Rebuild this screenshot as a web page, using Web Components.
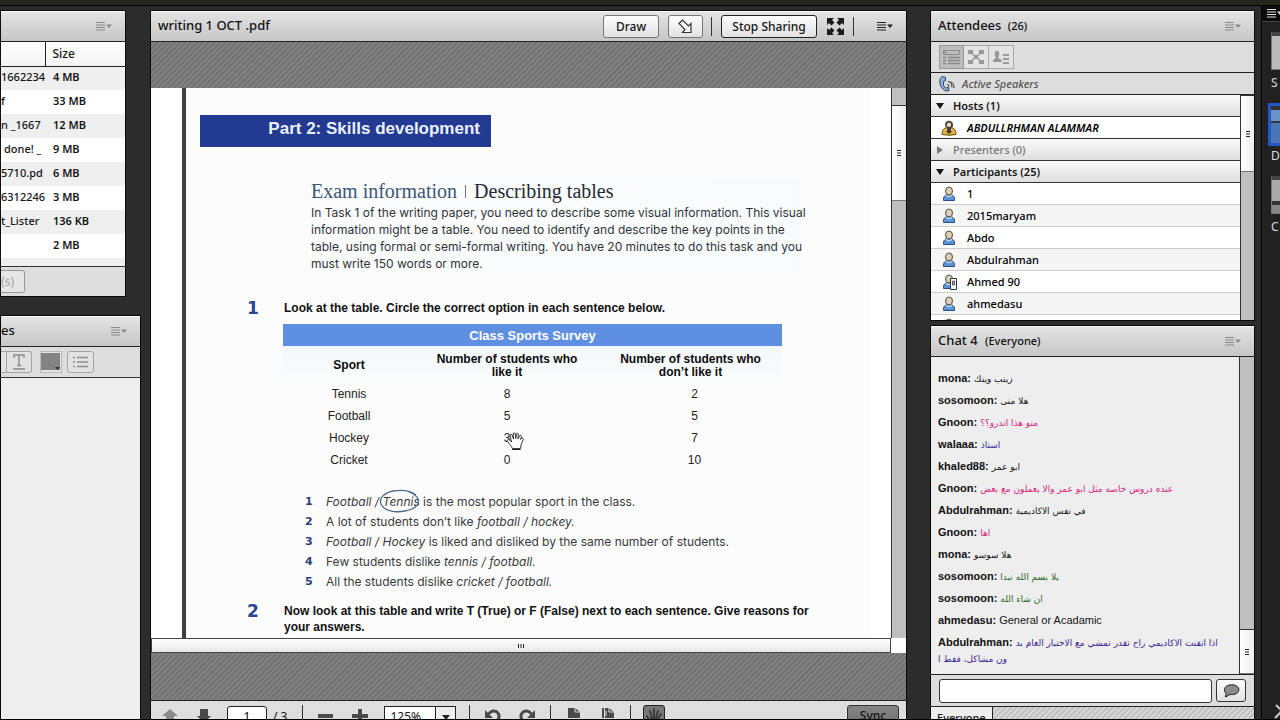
<!DOCTYPE html>
<html lang="en">
<head>
<meta charset="utf-8">
<title>Meeting room</title>
<style>
html, body { margin: 0; height: 100%; }
body { overflow: hidden; background: #2c2c2c; font-family: "Noto Sans", "Open Sans", sans-serif; font-size: 12px; color: #161616; }
</style>
</head>
<body>
<meeting-room></meeting-room>
<script>
function define(name, html) {
  const template = document.createElement('template');
  template.innerHTML = html;
  customElements.define(name, class extends HTMLElement {
    constructor() {
      super();
      this.attachShadow({ mode: 'open' }).append(template.content.cloneNode(true));
    }
  });
}

/* Pod options glyph: four lines and a small triangle */
define('menu-glyph', `
<style>:host{display:block;width:16px;height:9px;color:#8a8a8a}svg{display:block}</style>
<svg width="16" height="9" viewBox="0 0 16 9"><path d="M0 .5h9M0 3h9M0 5.5h9M0 8h9" stroke="currentColor" fill="none"/><path d="M10 2.5h6l-3 3.5z" fill="currentColor"/></svg>`);

/* Pod frame: header with title and actions, body below */
define('pod-frame', `
<style>
:host{display:flex;flex-direction:column;border:1px solid #0a0a0a;box-sizing:border-box;overflow:hidden;background:#ddd;min-width:0;min-height:0}
header{flex:none;box-sizing:border-box;height:31px;display:flex;align-items:center;padding:0 13px 0 7px;background:linear-gradient(#e3e3e3,#c6c6c6);border-top:1px solid #f8f8f8;border-bottom:1px solid #222}
h2{margin:0;padding-bottom:3px;flex:1;min-width:0;font-size:13px;line-height:18px;font-weight:500;white-space:nowrap;color:#111}
.body{flex:1;min-height:0;display:flex;flex-direction:column}
</style>
<header><h2><slot name="title"></slot></h2><slot name="actions"></slot></header>
<div class="body"><slot></slot></div>`);

define('grip-bar', `
<style>
:host{display:flex;flex-direction:column;flex:none;width:13px;background:#c0c0c0;border-left:1px solid #333;box-sizing:border-box}
.thumb{flex:none;display:grid;place-items:center;box-sizing:border-box;height:var(--thumb,60px);margin-top:var(--top,0);background:linear-gradient(90deg,#fff,#eee);border-top:1px solid #333;border-bottom:1px solid #777}
</style>
<div class="thumb"><svg width="4" height="6" viewBox="0 0 4 6"><path d="M0 .5h4M0 3h4M0 5.5h4" stroke="#222"/></svg></div>`);

define('files-pod', `
<style>
:host{display:block;flex:none}
pod-frame{margin-right:15px;border-left-color:#111}
table{width:100%;border-collapse:collapse;table-layout:fixed;font-size:11px;font-weight:600;background:#fff}
col.name{width:44px}
th,td{height:24px;padding:0 0 2px;box-sizing:border-box;text-align:left;white-space:nowrap;line-height:16px;font-weight:600}
th{height:24px;padding:0;border-bottom:1px solid #222;background:linear-gradient(#fff,#f3f3f3);font-size:12px;font-weight:500}
th+th{border-left:1px solid #222;padding-left:7px}
td{font-weight:500}
td+td{padding-left:8px;font-weight:600}
tbody tr:nth-child(odd){background:#efefef}
td.in{padding-left:3px}
.rest{height:8px;background:#efefef}
footer{height:30px;border-top:1px solid #333;background:#ddd;display:flex;align-items:center;box-sizing:border-box}
button{font:500 12px/16px "Noto Sans",sans-serif;color:#aaa;height:23px;width:24px;padding:0;text-align:left;background:#e6e6e6;border:1px solid #999;border-left:0;border-radius:0 3px 3px 0}
</style>
<pod-frame>
<menu-glyph slot="actions"></menu-glyph>
<table><colgroup><col class="name"><col></colgroup>
<thead><tr><th></th><th>Size</th></tr></thead>
<tbody>
<tr><td>1662234</td><td>4 MB</td></tr>
<tr><td>f</td><td>33 MB</td></tr>
<tr><td>n _1667</td><td>12 MB</td></tr>
<tr><td class="in">done! _</td><td>9 MB</td></tr>
<tr><td>5710.pd</td><td>6 MB</td></tr>
<tr><td>6312246</td><td>3 MB</td></tr>
<tr><td>t_Lister</td><td>136 KB</td></tr>
<tr><td></td><td>2 MB</td></tr>
</tbody></table>
<div class="rest"></div>
<footer><button type="button">(s)</button></footer>
</pod-frame>`);

define('notes-pod', `
<style>
:host{display:flex;flex:1;min-height:0}
pod-frame{flex:1}
h3{margin:0 0 0 -7px;font:inherit}
.tools{flex:none;height:31px;box-sizing:border-box;display:flex;align-items:center;border-bottom:1px solid #333;background:#ddd}
button{box-sizing:border-box;height:22px;padding:0;display:grid;place-items:center;background:#e2e2e2;border:1px solid #a5a5a5}
.a{width:6px;border-left:0}
.b{width:25px;border-left:0;border-radius:0 3px 3px 0}
.c{width:22px;margin-left:8px;border-color:#bbb}
.d{width:27px;margin-left:5px;border-radius:3px}
.page{flex:1;background:#eee}
</style>
<pod-frame>
<h3 slot="title">es</h3><menu-glyph slot="actions"></menu-glyph>
<div class="tools"><button class="a" aria-label="Style"></button><button class="b" aria-label="Underline"><svg width="12" height="16" viewBox="0 0 12 16"><path d="M1 4V1h10v3M6 1v10M4 11.5h4M0 15h12" fill="none" stroke="#8a8a8a" stroke-width="1.4"/></svg></button>
<button class="c" aria-label="Colour"><svg width="20" height="18" viewBox="0 0 20 18"><path d="M0 0h19v17H0z" fill="#838383"/><path d="M14 14h5l-2.500 3z" fill="#333"/></svg></button>
<button class="d" aria-label="List"><svg width="15" height="12" viewBox="0 0 15 12"><path d="M0 1.500h2M0 6h2M0 10.500h2M4 1.500h11M4 6h11M4 10.500h11" stroke="#8d8d8d" stroke-width="1.500"/></svg></button></div>
<div class="page"></div>
</pod-frame>`);

define('sports-table', `
<style>
:host{display:block}
table{width:499px;border-collapse:collapse;table-layout:fixed;text-align:center;font-size:12px;line-height:14px;color:#222}
.s{width:132px}.l{width:184px}
th,td{padding:0;height:22px;box-sizing:border-box}
td:last-child{padding-left:8px}
.title{background:#5f8fe0;color:#fff;font-size:13px;font-weight:bold;padding-top:2px}
.heads th{height:37px;padding-top:2px;line-height:13px;color:#0c0c0c;background:linear-gradient(#f3f8fc,#fbfdfd)}
tbody th{font-weight:normal}
.spot{position:relative}
.spot svg{position:absolute;left:2px;top:0}
</style>
<table>
<colgroup><col class="s"><col class="l"><col></colgroup>
<thead><tr><th class="title" colspan="3">Class Sports Survey</th></tr>
<tr class="heads"><th>Sport</th><th>Number of students who<br>like it</th><th>Number of students who<br>don’t like it</th></tr></thead>
<tbody>
<tr><th>Tennis</th><td>8</td><td>2</td></tr>
<tr><th>Football</th><td>5</td><td>5</td></tr>
<tr><th>Hockey</th><td><span class="spot">3<svg width="19" height="20" viewBox="0 0 19 20"><path d="M6.500 17.500C5 14.500 3 12.500 1.500 10.500c-1-1.500.8-2.500 2-1.500l2 2L4.200 4.800c-.3-1.800 1.500-2.200 2-.6L7.500 8 7.200 3c0-1.600 1.800-1.700 2-.2L9.800 7.500l.6-4.300c.2-1.500 2-1.300 1.900.2L12 8l1.500-3.200c.6-1.300 2.200-.7 1.900.6L14.500 8.500l1.200-1.200c1-.8 2 .2 1.500 1.200l-2 5-.7 4z" fill="#fff" stroke="#222" stroke-width=".9"/><path d="M6 18.500h8.500" stroke="#222"/></svg></span></td><td>7</td></tr>
<tr><th>Cricket</th><td>0</td><td>10</td></tr>
</tbody></table>`);

define('exercise-row', `
<style>
:host{display:grid;grid-template-columns:37px 1fr;font-weight:bold;font-size:12px;line-height:16px;color:#111;padding-left:47px}
.n{font:bold 17px/16px "DejaVu Sans",sans-serif;color:#2b4490}
</style><span class="n"><slot name="n"></slot></span><span><slot></slot></span>`);

define('document-page', `
<style>
:host{display:block;flex:1;min-width:0;overflow:hidden;background:#fff;font-family:"Liberation Sans",Arial,sans-serif}
article{margin:0 20px 0 31px;padding:27px 0 0 14px;border-left:4px solid #3e3e3e;background:#fcfcfd;min-height:100%;box-sizing:border-box;white-space:nowrap}
h1{margin:0;width:291px;height:32px;box-sizing:border-box;padding:0 11px 4px 0;text-align:right;background:#233a92;color:#e9f1fb;font-size:17px;line-height:28px;font-weight:bold}
section{margin:32px 0 28px 90px;padding-left:21px;width:512px;box-sizing:border-box;background:linear-gradient(90deg,#fcfcfd,#f8fbfc)}
h2{margin:0;font:20px/25px "Liberation Serif",serif;color:#222a33}
h2 b{font-weight:normal;color:#3a5678}
h2 i{display:inline-block;width:1px;height:13px;background:#777;margin:0 8px}
p{margin:0;font:12px/17px Inter,"Liberation Sans",sans-serif;color:#30343a}
sports-table{margin:8px 0 21px 83px}
ol{list-style:none;margin:0 0 11px 105px;padding:0;font:12px/20px Inter,"Liberation Sans",sans-serif;color:#3a3a3a}
li{display:grid;grid-template-columns:21px 1fr}
li b{font:bold 11px/20px "DejaVu Sans",sans-serif;color:#27407e}
.ring{position:relative}
.ring svg{position:absolute;left:-4px;top:-5px}
</style>
<article>
<h1>Part 2: Skills development</h1>
<section><h2><b>Exam information</b><i></i>Describing tables</h2>
<p>In Task 1 of the writing paper, you need to describe some visual information. This visual<br>information might be a table. You need to identify and describe the key points in the<br>table, using formal or semi-formal writing. You have 20 minutes to do this task and you<br>must write 150 words or more.</p></section>
<exercise-row><span slot="n">1</span>Look at the table. Circle the correct option in each sentence below.</exercise-row>
<sports-table></sports-table>
<ol>
<li><b>1</b><span><em>Football / <span class="ring">Tennis<svg width="41" height="24" viewBox="0 0 41 24"><path d="M37 6C31 1 22 .7 14 2 4 4 0 10 2 15c3 7 14 9 24 7 9-1.500 15-6 13-12-1-3-4-5-9-7" fill="none" stroke="#4c6c8c" stroke-width="1.300"/></svg></span></em> is the most popular sport in the class.</span></li>
<li><b>2</b><span>A lot of students don’t like <em>football / hockey.</em></span></li>
<li><b>3</b><span><em>Football / Hockey</em> is liked and disliked by the same number of students.</span></li>
<li><b>4</b><span>Few students dislike <em>tennis / football.</em></span></li>
<li><b>5</b><span>All the students dislike <em>cricket / football.</em></span></li>
</ol>
<exercise-row><span slot="n">2</span>Now look at this table and write T (True) or F (False) next to each sentence. Give reasons for<br>your answers.</exercise-row>
</article>`);

define('share-pod', `
<style>
:host{display:flex;flex:1;min-width:0}
pod-frame{flex:1}
.act{display:flex;align-items:center}
button{box-sizing:border-box;height:23px;padding:0;font:500 12px/16px "Noto Sans",sans-serif;color:#161616;background:linear-gradient(#fdfdfd,#e2e2e2);border:1px solid #777;border-radius:3px;display:grid;place-items:center}
.draw{width:56px}.point{width:35px;margin-left:9px}.stop{width:96px;border-color:#222;margin:0 10px 0 9px}
.full{border:0;background:none;width:17px}
.sep{width:1px;height:19px;background:#333;flex:none}
.point+.sep{margin-left:8px}
.full+.sep{margin:0 23px 0 9px}
menu-glyph{color:#222}
.stage{flex:1;min-height:0;display:flex;flex-direction:column;padding:46px 0 47px;background:#777 repeating-linear-gradient(135deg,#747474 0,#747474 2px,#8c8c8c 3px,#747474 4px)}
.view{flex:1;min-height:0;display:flex}
.view grip-bar{width:15px;--top:17px;--thumb:96px}
.hbar{flex:none;height:15px;margin-right:15px;box-sizing:border-box;border:1px solid #444;background:linear-gradient(#fff,#e8e8e8);display:grid;place-items:center}
.low{background:#fff;flex:none}
.tools{flex:none;height:31px;box-sizing:border-box;display:flex;align-items:center;padding:0 7px 0 11px;border-top:1px solid #222;background:#dedede;font-size:12px}
.tools button.i{border:0;background:none;width:16px}
.tools button.i.next{margin-left:18px}
.tools .sep{height:23px}
.tools .wide{margin:0 15px}
.tools .near{margin:0 12px 0 14px}
.turn{margin-left:15px}
input{box-sizing:border-box;width:40px;height:21px;margin:0 6px 0 15px;border:1px solid #222;border-radius:3px;font:12px "Noto Sans",sans-serif;text-align:center;padding:0;background:#fff}
.zoom{position:relative;display:block;margin:0 13px 0 16px}
select{appearance:none;display:block;box-sizing:border-box;width:72px;height:21px;border:1px solid #222;border-radius:0;padding:0 0 0 5px;font:12px "Noto Sans",sans-serif;color:#161616;background:linear-gradient(90deg,#fff 50px,#222 50px 51px,#eee 51px)}
.zoom svg{position:absolute;right:6px;top:9px;pointer-events:none}
.grab.grab{width:22px;background:#777;border-color:#222}
.sync{width:52px;margin-left:auto;background:linear-gradient(#858585,#6c6c6c);border-color:#333}
</style>
<pod-frame>
<span slot="title">writing 1 OCT .pdf</span>
<div slot="actions" class="act">
<button class="draw">Draw</button><button class="point" aria-label="Pointer"><svg width="16" height="15" viewBox="0 0 16 15"><path d="M1 4.500 4.500 1l6 6 2.500-2.500V13.500H4.500L7 10.500z" fill="#fafafa" stroke="#333" stroke-width="1.200"/></svg></button><span class="sep"></span>
<button class="stop">Stop Sharing</button><button class="full" aria-label="Full screen"><svg width="17" height="17" viewBox="0 0 17 17" fill="#1c1c1c"><path d="M0 0h7L5 2l2.500 2.500-3 3L2 5 0 7zM17 0v7l-2-2-2.500 2.500-3-3L12 2l-2-2zM0 17v-7l2 2 2.500-2.500 3 3L5 15l2 2zM17 17h-7l2-2-2.500-2.500 3-3L15 12l2-2z"/></svg></button><span class="sep"></span><menu-glyph></menu-glyph>
</div>
<div class="stage"><div class="view"><document-page></document-page><grip-bar></grip-bar></div>
<div class="low"><div class="hbar"><svg width="6" height="4" viewBox="0 0 6 4"><path d="M.5 0v4M3 0v4M5.500 0v4" stroke="#222"/></svg></div></div></div>
<div class="tools">
<button class="i" aria-label="Previous page"><svg width="16" height="14" viewBox="0 0 16 14"><path d="M8 0l8 7h-4v7H4V7H0z" fill="#8c8c8c"/></svg></button>
<button class="i next" aria-label="Next page"><svg width="16" height="14" viewBox="0 0 16 14"><path d="M8 14l7-7h-3V0H4v7H1z" fill="#4a4a4a"/></svg></button>
<input value="1" aria-label="Page"><span>/ 3</span>
<span class="sep wide"></span>
<button class="i" aria-label="Zoom out"><svg width="16" height="14" viewBox="0 0 16 14"><path d="M0 5h15v4H0z" fill="#4a4a4a"/></svg></button>
<button class="i next" aria-label="Zoom in"><svg width="16" height="14" viewBox="0 0 16 14"><path d="M6 0h4v5h6v4h-6v5H6V9H0V5h6z" fill="#4a4a4a"/></svg></button>
<label class="zoom"><select aria-label="Zoom level"><option>125%</option></select><svg width="8" height="5" viewBox="0 0 8 5"><path d="M0 0h8L4 5z" fill="#222"/></svg></label>
<span class="sep"></span>
<button class="i turn" aria-label="Rotate left"><svg width="16" height="14" viewBox="0 0 16 14"><path d="M3.500 5C6 1.500 10 1 12.500 3.500c2.500 2.500 2 6.500-1.500 9" fill="none" stroke="#4a4a4a" stroke-width="3"/><path d="M0 1v8h8z" fill="#4a4a4a"/></svg></button>
<button class="i next" aria-label="Rotate right"><svg width="16" height="14" viewBox="0 0 16 14"><path d="M12.500 5C10 1.500 6 1 3.500 3.500 1 6 1.500 10 5 12.500" fill="none" stroke="#4a4a4a" stroke-width="3"/><path d="M16 1v8H8z" fill="#4a4a4a"/></svg></button>
<span class="sep wide"></span>
<button class="i" aria-label="Fit page"><svg width="14" height="16" viewBox="0 0 14 16"><path d="M1 0h7l5 4v6H1z" fill="#4a4a4a"/><path d="M8 0v4h5" fill="none" stroke="#ddd"/><path d="M1 12h12v2H1z" fill="#4a4a4a"/></svg></button>
<button class="i next" aria-label="Fit width"><svg width="14" height="16" viewBox="0 0 14 16"><path d="M1 0h2v10H1zM4 0h4l5 4v6H4z" fill="#4a4a4a"/><path d="M8 0v4h5M5 3v5" fill="none" stroke="#ddd"/><path d="M1 12h12v2H1z" fill="#4a4a4a"/></svg></button>
<span class="sep near"></span>
<button class="grab" aria-label="Pan"><svg width="16" height="16" viewBox="0 0 16 16"><path d="M5 15 1 8M6 10 4 3M8 10V1M10 10l2-7M11 12l4-6" stroke="#3c3c3c" stroke-width="2" stroke-linecap="round"/><path d="M4 9h8l-1 7H6z" fill="#3c3c3c"/></svg></button>
<button class="sync">Sync</button>
</div>
</pod-frame>`);

/* One attendee: icon by role, name from the slot */
customElements.define('attendee-row', class extends HTMLElement {
  constructor() {
    super();
    const kind = this.getAttribute('kind') || 'user';
    const host = kind === 'host';
    const suit = host ? '#e0b43c' : '#5d93d4';
    const edge = host ? '#6b4d10' : '#284f86';
    this.attachShadow({ mode: 'open' }).innerHTML = `
<style>
:host{display:flex;align-items:center;box-sizing:border-box;height:22px;padding-left:10px;gap:10px;border-bottom:1px solid #ccc;background:#fff;font-size:11px;line-height:16px;font-weight:500;white-space:nowrap;color:#000}
:host(:nth-of-type(even)){background:#f5f5f5}
:host([kind=host]){font-style:italic;border-bottom-color:#333;font-weight:600;background:#fff}
svg{flex:none;display:block}
</style>
<svg width="16" height="16" viewBox="0 0 16 16"><path d="${host ? 'M1 14.500c0-5 2-7 7-7s7 2 7 7q-7 1.500-14 0z' : 'M2.500 14.500c-.5-4 1.500-6 5.500-6s6 2 5.500 6z'}" fill="${suit}" stroke="${edge}"/><path d="M5 9.500q3 2.500 6 0" fill="none" stroke="#e8f0fa"/><ellipse cx="8" cy="5" rx="3.500" ry="4" fill="#d9cfb4" stroke="#55503f"/>
${host ? '<path d="M4.500 3.500C5 .8 11 .8 11.500 3.500V7l-2 1 1 4-2.500 2-2.500-2 1-3z" fill="#4b3b2a"/><path d="M6 3.500q2-1.500 4 0v2.500q-2 2-4 0z" fill="#e6dcc4"/>' : ''}
${kind === 'mobile' ? '<path d="M9.500 4.500h6v11h-6z" fill="#fff" stroke="#333"/><path d="M11.500 7h2v4h-2z" fill="#8aa6c8" stroke="#333" stroke-width=".7"/>' : ''}</svg><span><slot></slot></span>`;
  }
});

define('group-head', `
<style>
:host{display:flex;align-items:center;box-sizing:border-box;height:22px;padding-left:5px;gap:9px;font-size:11px;line-height:16px;font-weight:600;background:linear-gradient(#fbfbfb,#dedede);border-bottom:1px solid #333;white-space:nowrap}
:host([closed]){color:#777;font-weight:500}
:host([closed]) svg{transform:rotate(-90deg)}
svg{flex:none}
</style><svg width="8" height="6" viewBox="0 0 8 6"><path d="M0 0h8L4 6z" fill="currentColor"/></svg><span><slot></slot></span>`);

define('attendees-pod', `
<style>
:host{display:flex;flex:none;height:311px}
pod-frame{flex:1}
small{font-size:11px;margin-left:3px}
.tools{flex:none;height:31px;box-sizing:border-box;display:flex;align-items:center;padding-left:8px;border-bottom:1px solid #222}
button{box-sizing:border-box;width:25px;height:24px;padding:0;display:grid;place-items:center;background:#e3e3e3;border:1px solid #aaa}
button+button{border-left:0}
.on{background:#bdbdbd;border-color:#999}
.speak{flex:none;height:22px;box-sizing:border-box;display:flex;align-items:center;gap:7px;padding-left:8px;font-size:11px;font-style:italic;font-weight:500;color:#555;border-bottom:1px solid #222}
.list{flex:1;min-height:0;display:flex}
.rows{flex:1;min-width:0;overflow:hidden;background:#fff}
grip-bar{--thumb:77px;width:14px}
</style>
<pod-frame>
<span slot="title">Attendees <small>(26)</small></span><menu-glyph slot="actions"></menu-glyph>
<div class="tools"><button class="on" aria-label="Attendee view"><svg width="17" height="15" viewBox="0 0 17 15"><path d="M.5.500h16v4H.5z" fill="none" stroke="#8a8a8a"/><path d="M0 7.500h3M5 7.500h12M0 10.500h3M5 10.500h12M0 13.500h3M5 13.500h12M1 2.500h3" stroke="#8a8a8a" stroke-width="1.500"/></svg></button><button aria-label="Breakout view"><svg width="16" height="14" viewBox="0 0 16 14"><path d="M2 2l12 10M14 2 2 12" stroke="#999" stroke-width="1.500"/><path d="M0 0h5v4H0zM11 0h5v4h-5zM0 10h5v4H0zM11 10h5v4h-5zM6 5h4v4H6z" fill="#999"/></svg></button><button aria-label="Status view"><svg width="16" height="14" viewBox="0 0 16 14"><path d="M0 12c0-3 1-3 3-4q-2-3-1-6 2-3 4 0 1 3-1 6c2 1 4 1 4 4zM10 4h6v2h-6zM10 8h6v2h-6zM10 12h6v2h-6z" fill="#999"/></svg></button></div>
<div class="speak"><svg width="16" height="16" viewBox="0 0 16 16"><path d="M2 1.500C0 4 .5 10 4 13c2 2 4 2.500 6 1.500l-.5-3-3 .5C4.500 10.500 4 7.500 4.500 5.500l2-.8V1.500C5 .5 3 .5 2 1.500z" fill="#8fb6dc" stroke="#24405e"/><path d="M8 8q2 .5 2 3M9 5.500q4 .5 4 6M11 6q4 0 4 6" fill="none" stroke="#333"/></svg><span>Active Speakers</span></div>
<div class="list"><div class="rows">
<group-head>Hosts (1)</group-head>
<div><attendee-row kind="host">ABDULLRHMAN ALAMMAR</attendee-row></div>
<group-head closed>Presenters (0)</group-head>
<group-head>Participants (25)</group-head>
<div><attendee-row>1</attendee-row><attendee-row>2015maryam</attendee-row><attendee-row>Abdo</attendee-row><attendee-row>Abdulrahman</attendee-row><attendee-row kind="mobile">Ahmed 90</attendee-row><attendee-row>ahmedasu</attendee-row><attendee-row></attendee-row></div>
</div><grip-bar></grip-bar></div>
</pod-frame>`);

define('chat-line', `
<style>
:host{display:block;padding:3px 0;font:11px/16px "Liberation Sans",Arial,sans-serif;color:#161616;white-space:nowrap}
b{color:#111}
.t{color:var(--tone,#161616)}
</style><b><slot name="who"></slot>:</b> <span class="t"><slot></slot></span>`);

define('chat-pod', `
<style>
:host{display:flex;flex:1;min-height:0;margin-top:4px}
pod-frame{flex:1}
small{font-size:11px;margin-left:4px}
.log{flex:1;min-height:0;display:flex;background:#eee}
.lines{flex:1;min-width:0;overflow:hidden;padding:10px 0 0 7px}
bdi{font:9px/12px "DejaVu Sans",sans-serif}
.pink{--tone:#d8257c}.navy{--tone:#34309a}.green{--tone:#2b6a2b}.violet{--tone:#3c1f94}
grip-bar{width:15px;justify-content:flex-end;--thumb:45px}
form{flex:none;height:32px;box-sizing:border-box;display:flex;align-items:center;gap:4px;margin:0;padding:0 8px;border-top:1px solid #222}
input{flex:1;min-width:0;height:24px;box-sizing:border-box;border:1px solid #333;border-radius:3px;background:#fff;padding:0 4px}
button{flex:none;width:30px;height:23px;box-sizing:border-box;padding:0;display:grid;place-items:center;border:1px solid #333;border-radius:3px;background:linear-gradient(#fcfcfc,#e2e2e2)}
nav{flex:none;height:25px;box-sizing:border-box;border-top:1px solid #222;display:flex;background:#ccc repeating-linear-gradient(135deg,#c4c4c4 0,#c4c4c4 2px,#e4e4e4 3px,#c4c4c4 4px)}
nav a{width:62px;box-sizing:border-box;padding:1px 0 0 6px;border-right:1px solid #222;background:#eee;color:#161616;text-decoration:none;font-size:11px;line-height:20px;font-weight:500}
</style>
<pod-frame>
<span slot="title">Chat 4 <small>(Everyone)</small></span><menu-glyph slot="actions"></menu-glyph>
<div class="log"><div class="lines">
<chat-line><span slot="who">mona</span><bdi dir="rtl">زينب وينك</bdi></chat-line>
<chat-line><span slot="who">sosomoon</span><bdi dir="rtl">هلا منى</bdi></chat-line>
<chat-line class="pink"><span slot="who">Gnoon</span><bdi dir="rtl">منو هذا اندرو؟؟</bdi></chat-line>
<chat-line class="navy"><span slot="who">walaaa</span><bdi dir="rtl">استاذ</bdi></chat-line>
<chat-line><span slot="who">khaled88</span><bdi dir="rtl">ابو عمر</bdi></chat-line>
<chat-line class="pink"><span slot="who">Gnoon</span><bdi dir="rtl">عنده دروس خاصه مثل ابو عمر والا يعملون مع بعض</bdi></chat-line>
<chat-line><span slot="who">Abdulrahman</span><bdi dir="rtl">في نفس الاكاديمية</bdi></chat-line>
<chat-line class="pink"><span slot="who">Gnoon</span><bdi dir="rtl">اها</bdi></chat-line>
<chat-line><span slot="who">mona</span><bdi dir="rtl">هلا سوسو</bdi></chat-line>
<chat-line class="green"><span slot="who">sosomoon</span><bdi dir="rtl">يلا بسم الله نبدا</bdi></chat-line>
<chat-line class="green"><span slot="who">sosomoon</span><bdi dir="rtl">ان شاء الله</bdi></chat-line>
<chat-line><span slot="who">ahmedasu</span>General or Acadamic</chat-line>
<chat-line class="violet"><span slot="who">Abdulrahman</span><bdi dir="rtl">اذا اتقنت الاكاديمي راح تقدر تمشي مع الاختبار العام بد</bdi><br><bdi dir="rtl">ون مشاكل، فقط ا</bdi></chat-line>
</div><grip-bar></grip-bar></div>
<form><input type="text" aria-label="Message"><button type="button" aria-label="Send"><svg width="17" height="14" viewBox="0 0 17 14"><path d="M3 9.500C-1 5 3 .8 8.500.8S17 4 15.500 7.500C14.500 10 10 11 7 10.500L2.500 13z" fill="#8c8c8c" stroke="#222"/></svg></button></form>
<nav><a href="#everyone">Everyone</a></nav>
</pod-frame>`);

define('layout-strip', `
<style>
:host{display:flex;flex-direction:column;flex:none;width:18px;margin-top:-4px;border-left:1px solid #000;background:#212121;overflow:hidden;color:#ddd;font-size:12px}
.top{flex:none;height:15px;padding-left:5px;background:#0c0c0c;border-bottom:1px solid #444;display:flex;align-items:center}
menu-glyph{color:#ddd;flex:none}
.item{padding:10px 0 0 9px}
.pic{height:38px;width:30px;box-sizing:border-box;border:1px solid #777;border-top:4px solid #444;background:#bbb}
.low{background:linear-gradient(#aaa 65%,#333 65% 75%,#888 75%)}
.on{margin-left:-3px;height:43px;border:3px solid #2357c8;background:linear-gradient(#333 4px,#6c94cc 4px 15px,#333 15px 17px,#4a76b4 17px)}
span{display:block;line-height:20px;margin-top:3px}
.on+span{margin-top:0}
.gear{margin:auto 0 12px 12px;display:block;flex:none}
</style>
<div class="top"><menu-glyph></menu-glyph></div>
<div class="item"><div class="pic"></div><span>S</span></div>
<div class="item"><div class="pic on"></div><span>D</span></div>
<div class="item"><div class="pic low"></div><span>C</span></div>
<svg class="gear" width="14" height="16" viewBox="0 0 14 16"><path d="M1 14 11 4M2 1l4 4M6 6l7 8" stroke="#ccc" stroke-width="2"/></svg>`);

define('meeting-room', `
<style>
:host{display:block;height:100vh;box-sizing:border-box;overflow:hidden;border-bottom:1px solid #000;background:#2c2c2c}
.cap{height:5px;background:#24251b;border-bottom:1px solid #000}
main{display:flex;box-sizing:border-box;height:calc(100vh + 6px);padding-top:4px}
.left{flex:none;width:141px;display:flex;flex-direction:column;gap:18px;margin-right:9px}
.right{flex:none;width:325px;display:flex;flex-direction:column;margin:0 6px 0 23px}
</style>
<div class="cap"></div>
<main>
<div class="left"><files-pod></files-pod><notes-pod></notes-pod></div>
<share-pod></share-pod>
<div class="right"><attendees-pod></attendees-pod><chat-pod></chat-pod></div>
<layout-strip></layout-strip>
</main>`);
</script>
</body>
</html>
